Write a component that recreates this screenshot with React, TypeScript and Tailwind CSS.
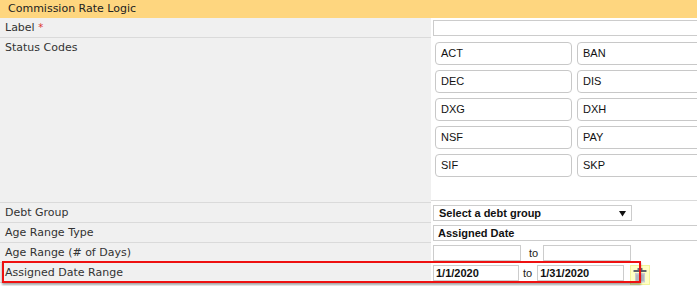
import React from 'react';

const codes = ['ACT', 'BAN', 'DEC', 'DIS', 'DXG', 'DXH', 'NSF', 'PAY', 'SIF', 'SKP'];

const labelCls =
  "w-[431px] shrink-0 bg-[#f0f0f0] border-b border-[#dadada] pl-[5px] text-[11px] leading-[19px] text-[#333] font-['DejaVu_Sans',sans-serif]";
const valueFont = "font-['Liberation_Sans',Arial,sans-serif] text-[11px]";

const Row: React.FC<{ label: React.ReactNode; children?: React.ReactNode; labelHeight?: string }> = ({
  label,
  children,
  labelHeight = 'h-[20px]',
}) => (
  <div className="flex">
    <div className={`${labelCls} ${labelHeight}`}>{label}</div>
    <div className="flex-1 bg-white min-w-0 overflow-hidden">{children}</div>
  </div>
);

const TrashIcon = () => (
  <svg width="16" height="16" viewBox="0 0 16 16">
    <rect x="5.5" y="1" width="5" height="2" rx="0.5" fill="#6b6f78" />
    <rect x="1.5" y="3" width="13" height="2" rx="0.5" fill="#5f636c" />
    <rect x="3" y="6" width="10" height="9.5" fill="#c9ccd2" />
    <path d="M5 7.5v6.5M7 7.5v6.5M9 7.5v6.5M11 7.5v6.5" stroke="#9ea2aa" strokeWidth="1" />
  </svg>
);

export default function App() {
  return (
    <div className="w-[697px] h-[286px] overflow-hidden bg-white relative">
      <div className="h-[18px] bg-[#fed67f] pl-[8px] text-[11px] leading-[17px] text-[#222] font-['DejaVu_Sans',sans-serif]">
        Commission Rate Logic
      </div>

      <Row
        label={
          <>
            Label <span className="text-[#d33] text-[10px] align-top">*</span>
          </>
        }
      >
        <div className="pt-[2px] pl-[2px]">
          <div className="w-[320px] h-[16px] border border-[#cccccc] bg-white" />
        </div>
      </Row>

      <Row label="Status Codes" labelHeight="h-[165px]">
        <div className="h-[163px] border-b border-[#dadada] pt-[4px] pl-[4px]">
          <div className="grid grid-cols-[137px_137px] gap-x-[5px] gap-y-[5px]">
            {codes.map((c) => (
              <div
                key={c}
                className={`h-[23px] rounded-[4px] border border-[#c8c8c8] bg-white pl-[5px] leading-[21px] text-[#111] ${valueFont}`}
              >
                {c}
              </div>
            ))}
          </div>
        </div>
      </Row>

      <Row label="Debt Group">
        <div className="pt-[2px] pl-[2px]">
          <div className={`w-[199px] h-[16px] border border-[#cccccc] bg-white flex items-center justify-between pl-[5px] pr-[5px] font-bold text-[#111] ${valueFont}`}>
            <span className="leading-[14px]">Select a debt group</span>
            <svg width="7" height="7" viewBox="0 0 7 7">
              <path d="M0 1h7L3.5 6.5z" fill="#111" />
            </svg>
          </div>
        </div>
      </Row>

      <Row label="Age Range Type">
        <div className="pt-[2px] pl-[2px]">
          <div className={`w-[320px] h-[16px] border border-[#cccccc] bg-white pl-[4px] leading-[14px] font-bold text-[#111] ${valueFont}`}>
            Assigned Date
          </div>
        </div>
      </Row>

      <Row label="Age Range (# of Days)">
        <div className={`pt-[2px] pl-[2px] flex items-center text-[#222] ${valueFont}`}>
          <div className="w-[88px] h-[16px] border border-[#cccccc] bg-white" />
          <span className="ml-[8px] mr-[5px] leading-[16px]">to</span>
          <div className="w-[88px] h-[16px] border border-[#cccccc] bg-white" />
        </div>
      </Row>

      <div className="relative">
        <Row label="Assigned Date Range">
          <div className={`pt-[2px] pl-[2px] flex items-start text-[#222] ${valueFont}`}>
            <div className="w-[86px] h-[16px] border border-[#cccccc] bg-white pl-[2px] leading-[14px] font-bold text-[#111]">
              1/1/2020
            </div>
            <span className="ml-[4px] mr-[5px] leading-[16px]">to</span>
            <div className="w-[87px] h-[16px] border border-[#cccccc] bg-white pl-[2px] leading-[14px] font-bold text-[#111]">
              1/31/2020
            </div>
            <div className="ml-[6px] w-[20px] h-[20px] bg-[#ffffc4] border border-[#f3f39a] flex items-center justify-center">
              <TrashIcon />
            </div>
          </div>
        </Row>
        <div className="absolute left-[2px] top-[-2px] w-[639px] h-[22px] border-2 border-[#ee1111] shadow-[0_2px_2px_rgba(0,0,0,0.35)] pointer-events-none" />
      </div>
    </div>
  );
}
